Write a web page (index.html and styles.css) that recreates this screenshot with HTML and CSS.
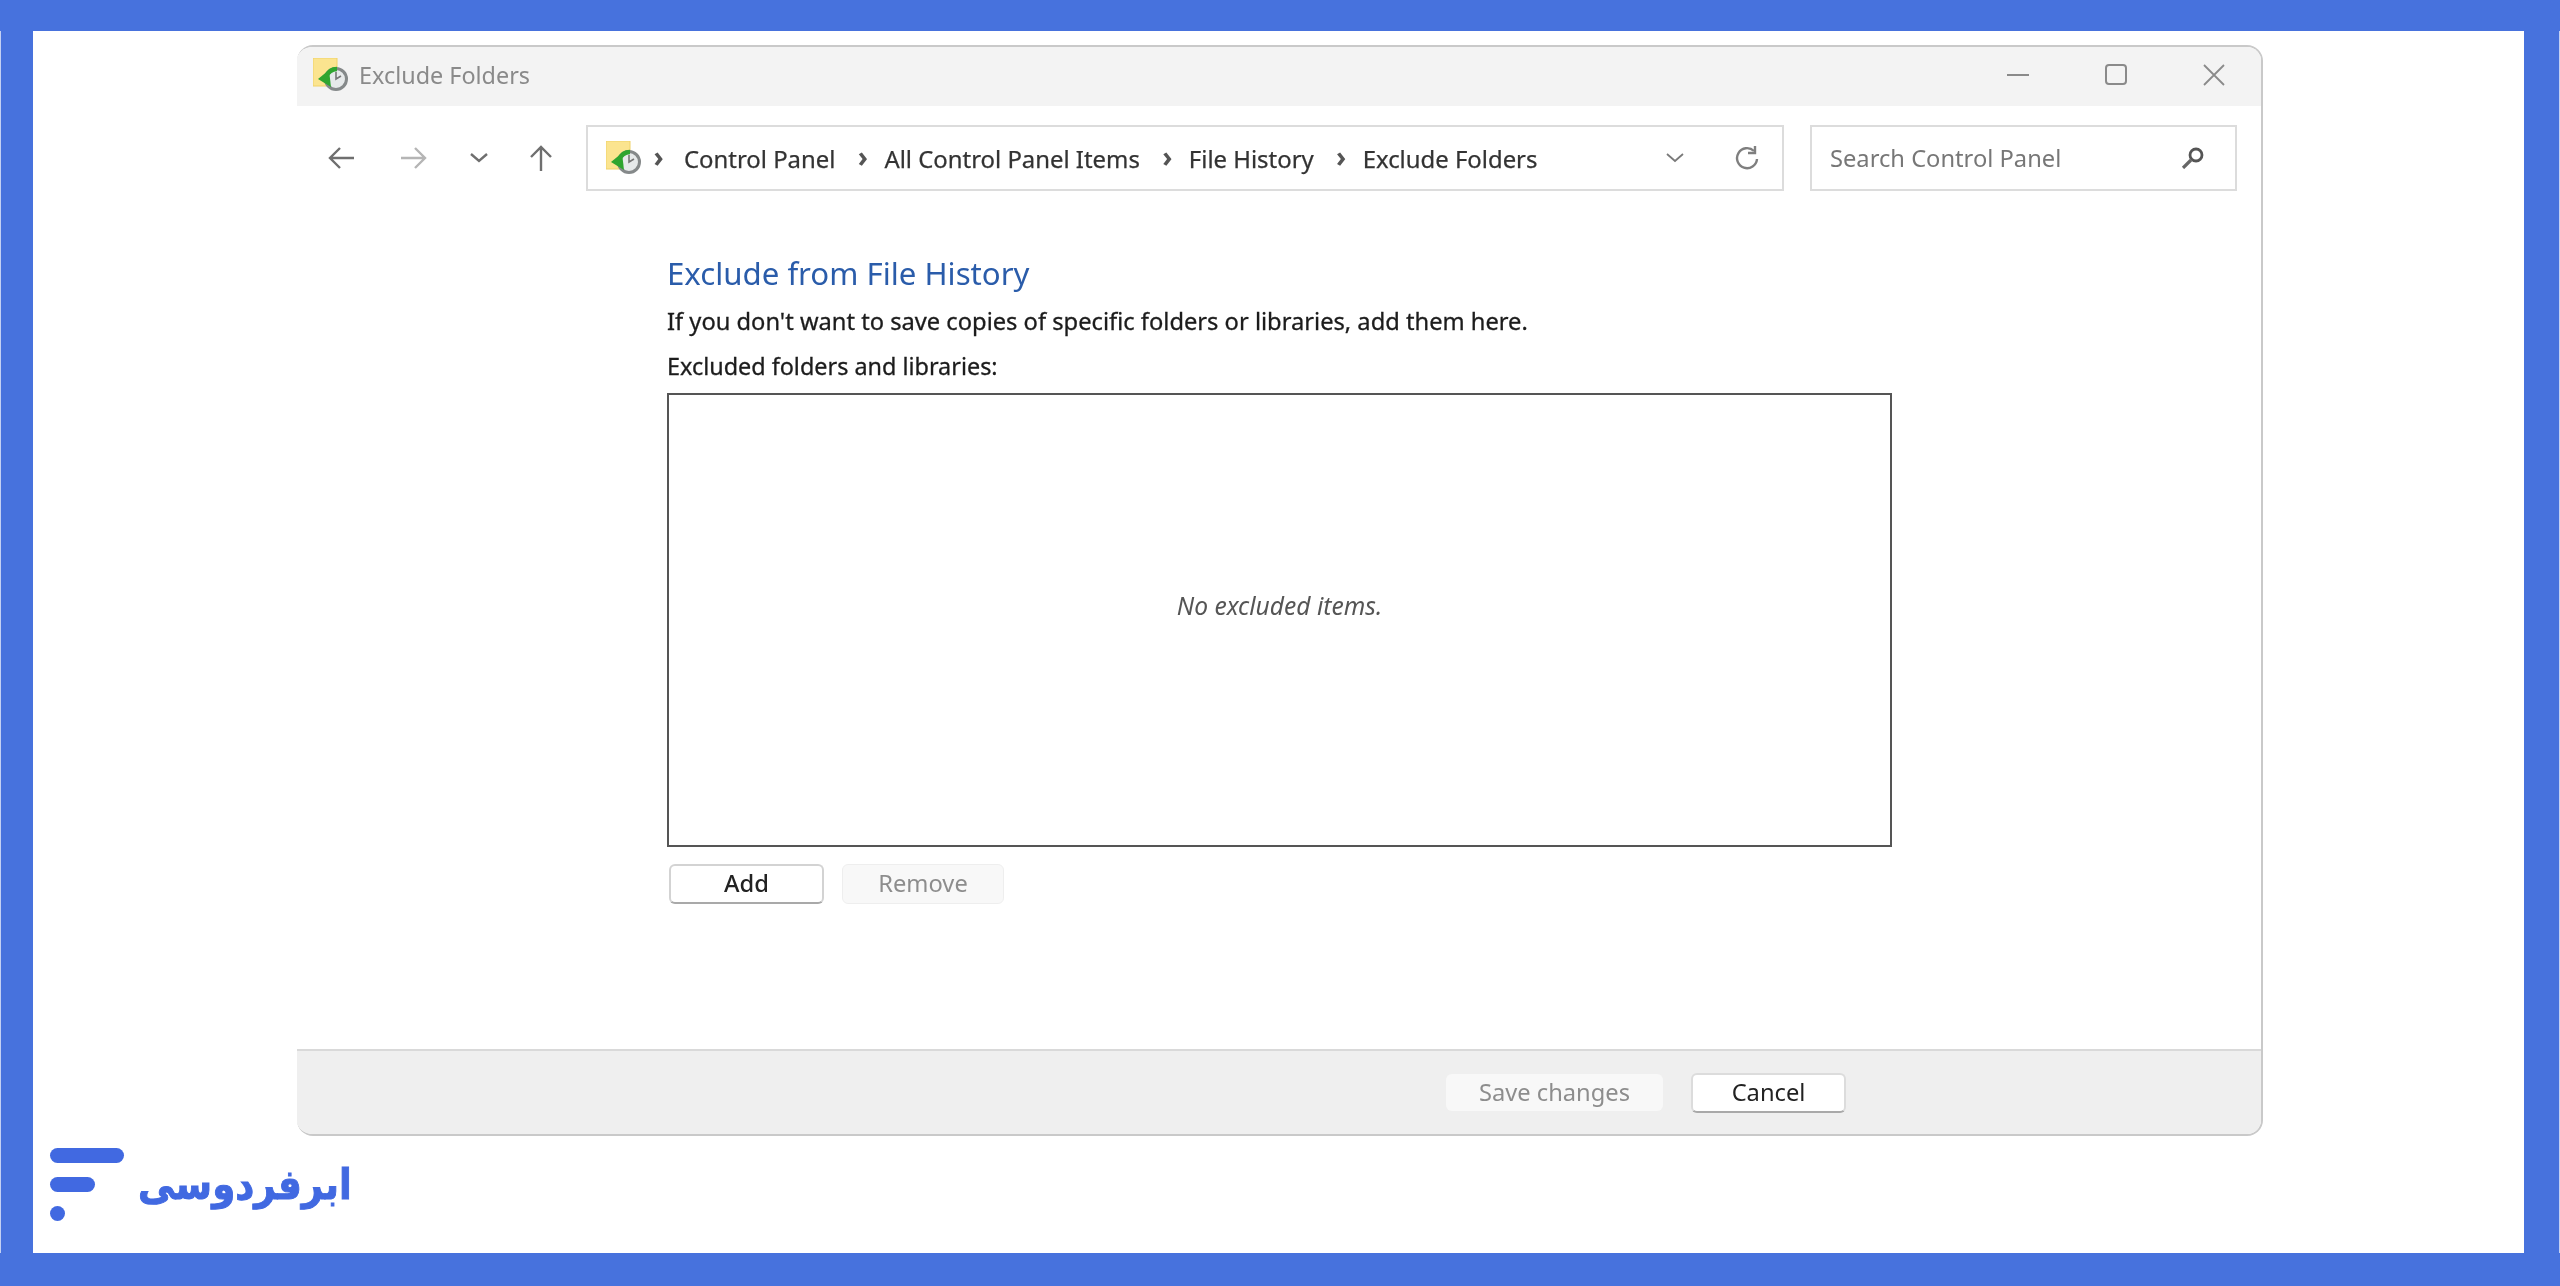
FILE: index.html
```html
<!DOCTYPE html>
<html lang="en">
<head>
<meta charset="UTF-8">
<title>Exclude Folders</title>
<link rel="stylesheet" href="styles.css">
</head>
<body>

<svg class="defs" width="0" height="0">
  <symbol id="history" viewBox="0 0 36 34">
    <rect x="0" y="0" width="24" height="28" fill="#fbe48f" stroke="#f0d268" stroke-width="1"/>
    <circle cx="23" cy="21" r="10.5" fill="#e6e9ea" stroke="#85898a" stroke-width="3"/>
    <path d="M23 14v7l5-3" fill="none" stroke="#777" stroke-width="1.6"/>
    <path d="M13 19c2-5 6-8 11-8" fill="none" stroke="#2fa52f" stroke-width="4.5"/>
    <path d="M5 21l11-9 2 17z" fill="#2fa52f"/>
  </symbol>
</svg>

<div class="frame">
  <div class="window">

    <div class="titlebar">
      <svg class="app-icon"><use href="#history"/></svg>
      <span class="title">Exclude Folders</span>
      <div class="controls">
        <svg class="ctl" viewBox="0 0 22 22"><path d="M0 11h22" stroke="#8a8a8a" stroke-width="2"/></svg>
        <svg class="ctl" viewBox="0 0 22 22"><rect x="1" y="1" width="20" height="19" rx="3" fill="none" stroke="#8a8a8a" stroke-width="2"/></svg>
        <svg class="ctl" viewBox="0 0 22 22"><path d="M1 1l20 20M21 1L1 21" stroke="#8a8a8a" stroke-width="1.8"/></svg>
      </div>
    </div>

    <div class="toolbar">
      <div class="nav-btn nav-back">
        <svg width="26" height="24" viewBox="0 0 26 24"><path d="M26 12H2M12 2L2 12l10 10" fill="none" stroke="#6f6f6f" stroke-width="2.4"/></svg>
      </div>
      <div class="nav-btn nav-forward">
        <svg width="26" height="24" viewBox="0 0 26 24"><path d="M0 12h24M14 2l10 10-10 10" fill="none" stroke="#b5b5b5" stroke-width="2.4"/></svg>
      </div>
      <div class="nav-btn nav-down">
        <svg width="18" height="10" viewBox="0 0 18 10"><path d="M1 1l8 7 8-7" fill="none" stroke="#6f6f6f" stroke-width="2.4"/></svg>
      </div>
      <div class="nav-btn nav-up">
        <svg width="24" height="26" viewBox="0 0 24 26"><path d="M12 26V2M2 12L12 2l10 10" fill="none" stroke="#6f6f6f" stroke-width="2.4"/></svg>
      </div>

      <div class="address">
        <svg class="app-icon"><use href="#history"/></svg>
        <span class="sep sep-first">&rsaquo;</span>
        <span class="crumb">Control Panel</span>
        <span class="sep">&rsaquo;</span>
        <span class="crumb">All Control Panel Items</span>
        <span class="sep">&rsaquo;</span>
        <span class="crumb">File History</span>
        <span class="sep">&rsaquo;</span>
        <span class="crumb">Exclude Folders</span>
        <svg class="addr-down" width="18" height="10" viewBox="0 0 18 10"><path d="M1 1l8 7 8-7" fill="none" stroke="#7a7a7a" stroke-width="1.8"/></svg>
        <svg class="refresh" width="26" height="24" viewBox="0 0 26 24"><path d="M20 5a10 10 0 1 0 3 8" fill="none" stroke="#7f7f7f" stroke-width="2.4"/><path d="M21 0v7h-7" fill="none" stroke="#7f7f7f" stroke-width="2.4"/></svg>
      </div>

      <div class="search">
        <span class="search-text">Search Control Panel</span>
        <svg width="24" height="22" viewBox="0 0 24 22"><circle cx="15" cy="8" r="6" fill="none" stroke="#555" stroke-width="2.8"/><path d="M10 13l-8 8" stroke="#666" stroke-width="3.2"/></svg>
      </div>
    </div>

    <div class="content">
      <h1>Exclude from File History</h1>
      <p class="intro">If you don't want to save copies of specific folders or libraries, add them here.</p>
      <p class="label">Excluded folders and libraries:</p>
      <div class="list">No excluded items.</div>
      <div class="list-buttons">
        <button class="btn btn-add">Add</button>
        <button class="btn btn-remove" disabled>Remove</button>
      </div>
    </div>

    <div class="footer">
      <button class="btn btn-save" disabled>Save changes</button>
      <button class="btn btn-cancel">Cancel</button>
    </div>
  </div>

  <div class="brand">
    <div class="brand-mark">
      <span class="bar bar-long"></span>
      <span class="bar bar-short"></span>
      <span class="bar bar-dot"></span>
    </div>
    <span class="brand-name" lang="fa" dir="rtl">ابرفردوسی</span>
  </div>
</div>

</body>
</html>
```

FILE: styles.css
```css
* {
  box-sizing: border-box;
}

html, body {
  margin: 0;
  height: 100%;
}

body {
  font-family: "Noto Sans", "Open Sans", sans-serif;
  color: #222;
  background: #4772dd;
  overflow: hidden;
}

.defs {
  display: block;
  height: 0;
}

.frame {
  position: relative;
  width: 2560px;
  height: 1286px;
  padding-top: 14px;
  border-style: solid;
  border-color: #4772dd;
  border-width: 31px 36px 33px 33px;
  background: #fff;
}

/* thin light slivers at the outer image edges */
.frame::before,
.frame::after {
  content: "";
  position: absolute;
  top: 0;
  bottom: 0;
  width: 1px;
  background: #c3d0f3;
}

.frame::before { left: -33px; }
.frame::after { right: -36px; }

/* window */
.window {
  width: 1966px;
  height: 1091px;
  margin-left: 264px;
  display: flex;
  flex-direction: column;
  border: 2px solid #c9c9c9;
  border-left: none;
  border-radius: 16px;
  overflow: hidden;
  filter: blur(0.4px);
}

.titlebar {
  height: 59px;
  flex: none;
  display: flex;
  align-items: center;
  padding: 0 0 3px 16px;
  background: #f3f3f3;
}

.app-icon {
  width: 36px;
  height: 34px;
  flex: none;
}

.title {
  margin-left: 10px;
  font-size: 23.4px;
  color: #8a8a8a;
}

.controls {
  margin-left: auto;
  display: flex;
  gap: 76px;
  margin-right: 36px;
}

.ctl {
  width: 22px;
  height: 22px;
}

/* toolbar */
.toolbar {
  display: flex;
  align-items: center;
  height: 66px;
  margin-top: 19px;
  flex: none;
  padding-left: 7px;
}

.nav-btn {
  display: flex;
  align-items: center;
  justify-content: center;
  height: 100%;
}

.nav-back { width: 74px; }
.nav-forward { width: 72px; }
.nav-down { width: 58px; }
.nav-up { width: 66px; }

.address {
  width: 1198px;
  height: 66px;
  margin-left: 12px;
  padding-left: 18px;
  display: flex;
  align-items: center;
  border: 2px solid #dcdcdc;
  font-size: 23.9px;
  color: #333;
}

.crumb {
  -webkit-text-stroke: 0.25px #333;
}

.sep {
  width: 25px;
  text-align: center;
  font-size: 28px;
  font-weight: 700;
  color: #555;
  line-height: 1;
  margin: -4px 9px 0 15px;
}

.sep-first {
  margin-left: 4px;
  margin-right: 13px;
}

.addr-down {
  margin-left: auto;
}

.refresh {
  margin-left: 50px;
  margin-right: 22px;
}

.search {
  width: 427px;
  height: 66px;
  margin-left: 26px;
  padding: 0 30px 0 18px;
  display: flex;
  align-items: center;
  justify-content: space-between;
  border: 2px solid #dcdcdc;
  font-size: 23.7px;
  color: #777;
}

/* main content */
.content {
  flex: 1;
  padding-left: 370px;
}

h1 {
  margin: 62px 0 0;
  font-size: 31.2px;
  font-weight: 400;
  line-height: 40px;
  color: #2a5caa;
}

.intro {
  margin: 13px 0 0;
  font-size: 23.7px;
  line-height: 30px;
  color: #1c1c1c;
  -webkit-text-stroke: 0.3px #1c1c1c;
}

.label {
  margin: 15px 0 0;
  font-size: 23.4px;
  line-height: 30px;
  color: #1c1c1c;
  -webkit-text-stroke: 0.3px #1c1c1c;
}

.list {
  width: 1225px;
  height: 454px;
  margin-top: 12px;
  padding-bottom: 30px;
  display: flex;
  align-items: center;
  justify-content: center;
  border: 2px solid #555;
  font-size: 24.6px;
  font-style: italic;
  color: #555;
}

.list-buttons {
  display: flex;
  gap: 18px;
  margin-top: 17px;
  padding-left: 2px;
}

.btn {
  font-family: inherit;
  font-size: 23.7px;
  padding: 0;
  border-radius: 6px;
  line-height: 1;
}

.btn-add {
  width: 155px;
  height: 40px;
  background: #fff;
  border: 2px solid #d3d3d3;
  border-bottom-color: #a9a9a9;
  color: #222;
  font-weight: 500;
}

.btn-remove {
  width: 162px;
  height: 40px;
  background: #f8f8f8;
  border: 1px solid #eee;
  color: #8d8d8d;
}

/* bottom bar */
.footer {
  height: 85px;
  flex: none;
  display: flex;
  align-items: center;
  padding-left: 1149px;
  background: #efefef;
  border-top: 2px solid #d9d9d9;
}

.btn-save {
  width: 217px;
  height: 37px;
  background: #f8f8f8;
  border: none;
  color: #8d8d8d;
}

.btn-cancel {
  width: 155px;
  height: 40px;
  margin-left: 28px;
  background: #fff;
  border: 2px solid #dcdcdc;
  border-bottom-color: #a9a9a9;
  color: #222;
}

/* logo */
.brand {
  display: flex;
  align-items: center;
  margin: 12px 0 0 17px;
}

.brand-mark {
  display: flex;
  flex-direction: column;
  align-items: flex-start;
  gap: 14px;
  width: 88px;
}

.bar {
  display: block;
  height: 15px;
  border-radius: 8px;
  background: #4169e1;
}

.bar-long { width: 74px; }
.bar-short { width: 45px; }
.bar-dot { width: 15px; }

.brand-name {
  font-family: "DejaVu Sans", sans-serif;
  font-size: 42px;
  font-weight: 700;
  line-height: 60px;
  color: #4169e1;
  -webkit-text-stroke: 1px #4169e1;
  transform: scaleX(0.885);
  transform-origin: left center;
}
```
